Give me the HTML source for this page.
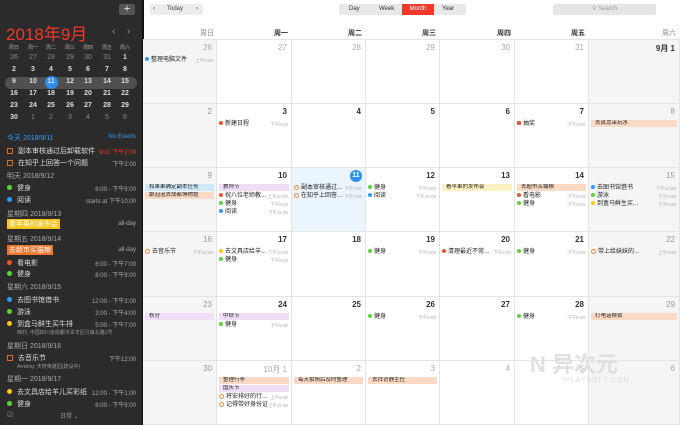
<!DOCTYPE html>
<html><head><meta charset="utf-8"><style>
*{margin:0;padding:0;box-sizing:border-box}
body{width:680px;height:425px;overflow:hidden;position:relative;background:#fff;font-family:"Liberation Sans","Noto Sans CJK SC",sans-serif}
.a{position:absolute;white-space:nowrap}
#sb{position:absolute;left:0;top:0;width:142px;height:425px;background:#2b2b2b;color:#ddd;font-size:7px}
#sb .l{position:absolute;left:7px;white-space:nowrap}
#sb .r{position:absolute;right:6px;white-space:nowrap;color:#aaa;font-size:6px}
.mc{position:absolute;width:18px;text-align:center;font-size:7px;color:#ddd;font-weight:bold}
.sd{display:inline-block;width:5px;height:5px;border-radius:50%;margin-right:5px;vertical-align:0}
.sq{display:inline-block;width:6px;height:6px;border:1px solid #e06a2c;margin-right:5px;vertical-align:-1px}
.c{position:absolute;border-right:1px solid #e4e4e4;border-bottom:1px solid #e4e4e4;overflow:hidden}
.w{background:#f5f5f5}
.n{position:absolute;right:4px;top:3px;font-size:8px;color:#333;font-weight:bold}
.g{color:#aaa;font-weight:normal}
.b{position:absolute;left:2px;right:2px;height:7px;font-size:5.5px;line-height:7px;padding-left:4px;color:#222;white-space:nowrap;overflow:hidden}
.e{position:absolute;left:2px;right:2px;height:7px;font-size:6px;line-height:7px;color:#222;white-space:nowrap}
.e i{display:inline-block;width:4px;height:4px;border-radius:50%;margin-right:2px;vertical-align:0}
.e u{display:inline-block;width:5px;height:5px;border-radius:50%;border:1px solid #f08a40;margin-right:2px;vertical-align:-1px;text-decoration:none}
.e s{position:absolute;right:1px;top:0;color:#aaa;font-size:4.5px;text-decoration:none}
.bl{background:#d0e9f8}.or{background:#fbdac5}.pu{background:#f0def6}.ye{background:#fcf1c2}
.dB{background:#2f9bf0}.dG{background:#5dd33c}.dR{background:#f0542c}.dY{background:#f7c81e}
.hd{position:absolute;top:28px;font-size:7px;font-weight:bold;color:#333;text-align:right}
</style></head><body>
<div id="sb">
<div class="a" style="left:119px;top:4px;width:16px;height:11px;background:#555;border-radius:2px;color:#eee;font-size:11px;line-height:11px;text-align:center">+</div>
<div class="a" style="left:6px;top:20px;font-size:17px;color:#f0392b">2018年9月</div>
<div class="a" style="left:112px;top:26px;color:#999;font-size:10px">‹</div>
<div class="a" style="left:127px;top:26px;color:#999;font-size:10px">›</div>
<div class="a" style="left:5px;top:77px;width:132px;height:12px;background:#505050;border-radius:6px"></div>
<div class="a" style="left:45px;top:76px;width:13px;height:13px;background:#2f8ff0;border-radius:50%"></div>
<div id="mini"></div>
<div class="l" style="top:133px;color:#3a9cf2">今天 2018/9/11</div><div class="r" style="top:134px;color:#3a9cf2">No Events</div>
<div class="l" style="top:146px"><span class="sq"></span>副本审核通过后卸载软件</div><div class="r" style="top:147px;color:#f0392b">9/10 下午2:00</div>
<div class="l" style="top:158px"><span class="sq"></span>在知乎上回答一个问题</div><div class="r" style="top:159px">下午2:00</div>
<div class="l" style="top:171px;color:#aaa">明天 2018/9/12</div>
<div class="l" style="top:183px"><span class="sd dG"></span>健身</div><div class="r" style="top:184px">8:00 - 下午9:00</div>
<div class="l" style="top:195px"><span class="sd dB"></span>阅读</div><div class="r" style="top:196px">starts at 下午10:00</div>
<div class="l" style="top:209px;color:#aaa">星期四 2018/9/13</div>
<div class="l" style="top:219px;background:#f5c51e;color:#fff;padding:0 2px;left:7px">看苹果的发布会</div><div class="r" style="top:221px">all-day</div>
<div class="l" style="top:234px;color:#aaa">星期五 2018/9/14</div>
<div class="l" style="top:245px;background:#f0742c;color:#fff;padding:0 2px">去超市买猫粮</div><div class="r" style="top:247px">all-day</div>
<div class="l" style="top:258px"><span class="sd dR"></span>看电影</div><div class="r" style="top:259px">6:00 - 下午7:00</div>
<div class="l" style="top:269px"><span class="sd dG"></span>健身</div><div class="r" style="top:270px">8:00 - 下午9:00</div>
<div class="l" style="top:282px;color:#aaa">星期六 2018/9/15</div>
<div class="l" style="top:295px"><span class="sd dB"></span>去图书馆借书</div><div class="r" style="top:296px">12:00 - 下午2:00</div>
<div class="l" style="top:307px"><span class="sd dG"></span>游泳</div><div class="r" style="top:308px">3:00 - 下午4:00</div>
<div class="l" style="top:319px"><span class="sd dY"></span>到盒马鲜生买牛排</div><div class="r" style="top:320px">5:00 - 下午7:00</div>
<div class="l" style="top:329px;left:17px;font-size:5px;color:#999">西村, 中国四川省成都市青羊区贝森北路1号</div>
<div class="l" style="top:341px;color:#aaa">星期日 2018/9/16</div>
<div class="l" style="top:353px"><span class="sq"></span>去音乐节</div><div class="r" style="top:354px">下午12:00</div>
<div class="l" style="top:363px;left:17px;font-size:5px;color:#999">Arriving: 天府英雄园(建设中)</div>
<div class="l" style="top:374px;color:#aaa">星期一 2018/9/17</div>
<div class="l" style="top:387px"><span class="sd dY"></span>去文具店给羊儿买彩纸</div><div class="r" style="top:388px">12:00 - 下午1:00</div>
<div class="l" style="top:399px"><span class="sd dG"></span>健身</div><div class="r" style="top:400px">8:00 - 下午9:00</div>
<div class="l" style="top:411px;color:#888">☑</div>
<div class="l" style="top:411px;left:60px;color:#999;font-size:6px">日常 ⌄</div>
</div>
<div class="a" style="left:142px;top:0;width:2px;height:425px;background:#111"></div>
<div class="a" style="left:150px;top:4px;width:53px;height:11px;background:#ececec;border-radius:2px;font-size:6px;line-height:11px;color:#444"><span style="position:absolute;left:3px">‹</span><span style="position:absolute;left:17px">Today</span><span style="position:absolute;left:46px">›</span></div>
<div class="a" style="left:339px;top:4px;width:127px;height:11px;background:#e8e8e8;border-radius:2px;font-size:6px;line-height:11px;color:#333">
<span class="a" style="left:10px">Day</span><span class="a" style="left:40px">Week</span><span class="a" style="left:63px;width:32px;height:11px;background:#f0392b;color:#fff;text-align:center">Month</span><span class="a" style="left:103px">Year</span></div>
<div class="a" style="left:553px;top:4px;width:103px;height:11px;background:#e6e6e6;border-radius:2px;font-size:6px;line-height:11px;color:#999;text-align:center">⚲ Search</div>
<div class="hd" style="left:143px;width:71px;color:#888;font-weight:normal">周日</div>
<div class="hd" style="left:217px;width:71px">周一</div>
<div class="hd" style="left:292px;width:70px">周二</div>
<div class="hd" style="left:366px;width:70px">周三</div>
<div class="hd" style="left:440px;width:71px">周四</div>
<div class="hd" style="left:515px;width:70px">周五</div>
<div class="hd" style="left:589px;width:87px;color:#888;font-weight:normal">周六</div>
<div class="a" style="left:143px;top:39px;width:537px;height:1px;background:#e4e4e4"></div>
<div id="grid"></div>
<div class="a" style="left:530px;top:347px;font-size:22px;color:#e0e0e0;font-weight:bold">N 异次元</div>
<div class="a" style="left:562px;top:377px;font-size:7px;color:#dadada;letter-spacing:1px">IPLAYSOFT.COM</div>
<script>
var mx=[5,24,42,61,79,98,116];
var rows=[["26","27","28","29","30","31","1"],["2","3","4","5","6","7","8"],["9","10","11","12","13","14","15"],["16","17","18","19","20","21","22"],["23","24","25","26","27","28","29"],["30","1","2","3","4","5","6"]];
var h='';["周日","周一","周二","周三","周四","周五","周六"].forEach(function(t,i){h+='<div class="mc" style="left:'+mx[i]+'px;top:44px;font-size:5px;color:#aaa;font-weight:normal">'+t+'</div>'});
rows.forEach(function(r,ri){r.forEach(function(t,i){var g=(ri==0&&i<6)||(ri==5&&i>0);h+='<div class="mc" style="left:'+mx[i]+'px;top:'+(54+ri*12)+'px;'+(g?'color:#888;font-weight:normal':'')+'">'+t+'</div>'})});
document.getElementById('mini').innerHTML=h;
var X=[143,217,292,366,440,515,589,680],Y=[40,104,168,232,297,361,425];
var D=[[["26",1],["27",1],["28",1],["29",1],["30",1],["31",1],["9月 1",0]],[["2",2],["3",0],["4",0],["5",0],["6",0],["7",0],["8",2]],[["9",2],["10",0],["11",3],["12",0],["13",0],["14",0],["15",2]],[["16",2],["17",0],["18",0],["19",0],["20",0],["21",0],["22",2]],[["23",2],["24",0],["25",0],["26",0],["27",0],["28",0],["29",2]],[["30",2],["10月 1",1],["2",1],["3",1],["4",1],["5",1],["6",1]]];
function B(c,t){return['b',c,t]}function E(d,t,s){return['e',d,t,s]}
var EV={"0,0":[E('dB','整理电脑文件','上午8:00')],"1,1":[E('dR','新建日程','下午8:00')],"1,5":[E('sqr','抽奖','下午8:00')],"1,6":[B('or','去真龙采玩水')],
"2,0":[B('bl','和果果确定副本任务'),B('or','跟泡泡去成都博物馆')],"2,1":[B('pu','教师节'),E('dR','祝八位老师教...','上午10:00'),E('dG','健身','下午8:00'),E('dB','阅读','下午11:00')],
"2,2":[E('o','副本审核通过...','下午2:00'),E('o','在知乎上回答...','下午2:00')],"2,3":[E('dG','健身','下午8:00'),E('dB','阅读','下午10:00')],"2,4":[B('ye','看苹果的发布会')],
"2,5":[B('or','去超市买猫粮'),E('dR','看电影','下午6:00'),E('dG','健身','下午8:00')],"2,6":[E('dB','去图书馆借书','下午12:00'),E('dG','游泳','下午3:00'),E('dY','到盒马鲜生买...','下午5:00')],
"3,0":[E('o','去音乐节','下午12:00')],"3,1":[E('dY','去文具店给羊...','下午12:00'),E('dG','健身','下午8:00')],"3,3":[E('dG','健身','下午8:00')],"3,4":[E('dR','清理最近不常...','下午8:00')],"3,5":[E('dG','健身','下午8:00')],"3,6":[E('o','带上给妹妹的...','上午8:00')],
"4,0":[B('pu','秋分')],"4,1":[B('pu','中秋节'),E('dG','健身','下午8:00')],"4,3":[E('dG','健身','下午8:00')],"4,5":[E('dG','健身','下午8:00')],"4,6":[B('or','打电话换锁')],
"5,1":[B('or','整理行李'),B('pu','国庆节'),E('o','将安排好的行...','上午8:00'),E('o','记得带好身份证','上午11:00')],"5,2":[B('or','每天拍照后及时整理')],"5,3":[B('or','去拜访静主任')]};
var g='';
for(var r=0;r<6;r++)for(var c=0;c<7;c++){var d=D[r][c],cls='c'+((c==0||c==6)?' w':'');var st='';if(r==2&&c==2)st='background:#eaf5fd;';
g+='<div class="'+cls+'" style="'+st+'left:'+X[c]+'px;top:'+Y[r]+'px;width:'+(X[c+1]-X[c])+'px;height:'+(Y[r+1]-Y[r])+'px">';
if(d[1]==3)g+='<div class="a" style="right:3px;top:2px;width:12px;height:12px;border-radius:50%;background:#2f8ff0;color:#fff;font-size:7px;font-weight:bold;line-height:12px;text-align:center">11</div>';
else g+='<div class="n'+(d[1]==1?' g':'')+'" style="'+(d[1]==2?'color:#999;font-weight:normal':'')+'">'+d[0]+'</div>';
var ev=EV[r+','+c]||[],y=16;
ev.forEach(function(e){if(e[0]=='b'){g+='<div class="b '+e[1]+'" style="top:'+y+'px">'+e[2]+'</div>';y+=8;}else{var ic=e[1]=='o'?'<u></u>':(e[1]=='sqr'?'<i style="border-radius:1px;background:#f0542c"></i>':'<i class="'+e[1]+'"></i>');g+='<div class="e" style="top:'+(y+1)+'px">'+ic+e[2]+'<s>'+e[3]+'</s></div>';y+=8;}});
g+='</div>';}
document.getElementById('grid').innerHTML=g;
</script>
</body></html>
